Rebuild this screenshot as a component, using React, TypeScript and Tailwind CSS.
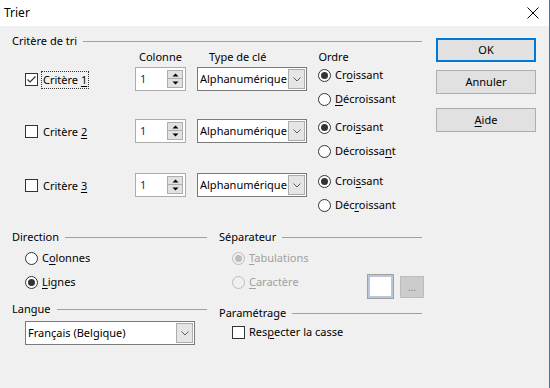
import React from 'react';

function U({ children }: { children: React.ReactNode }) {
  return <span className="underline underline-offset-2">{children}</span>;
}

function GroupHeader({ label }: { label: string }) {
  return (
    <div className="flex items-center h-4">
      <span>{label}</span>
      <div className="flex-1 h-px bg-[#a0a0a0] ml-[6px]" />
    </div>
  );
}

function Radio({
  checked,
  disabled,
  children,
}: {
  checked?: boolean;
  disabled?: boolean;
  children: React.ReactNode;
}) {
  return (
    <div className="flex items-center h-6">
      <div
        className={
          'w-[13px] h-[13px] rounded-full border flex items-center justify-center ' +
          (disabled ? 'border-[#bcbcbc] bg-[#f0f0f0]' : 'border-[#333] bg-white')
        }
      >
        {checked && (
          <div
            className={
              'w-[7px] h-[7px] rounded-full ' + (disabled ? 'bg-[#bcbcbc]' : 'bg-[#333]')
            }
          />
        )}
      </div>
      <span className={'ml-[4px] ' + (disabled ? 'text-[#a0a0a0]' : 'text-black')}>
        {children}
      </span>
    </div>
  );
}

function Checkbox({ checked }: { checked?: boolean }) {
  return (
    <div className="w-[13px] h-[13px] border border-[#333] bg-white flex items-center justify-center">
      {checked && (
        <svg width="11" height="11" viewBox="0 0 11 11">
          <path d="M1.5 5.5 L4 8 L9.5 2.5" fill="none" stroke="#333" strokeWidth="1.2" />
        </svg>
      )}
    </div>
  );
}

function Spin() {
  return (
    <div className="w-[51px] h-[24px] border border-[#acacac] bg-white flex items-center">
      <span className="ml-[4px] flex-1 text-[#4b1262]">1</span>
      <div className="flex flex-col mr-[2px] w-[16px]">
        <div className="h-[9px] bg-[#e1e1e1] border border-[#adadad] flex items-center justify-center">
          <svg width="7" height="4" viewBox="0 0 7 4">
            <path d="M0.5 3.5 L3.5 0.5 L6.5 3.5 Z" fill="#000" />
          </svg>
        </div>
        <div className="h-[9px] bg-[#e1e1e1] border border-[#adadad] border-t-0 flex items-center justify-center">
          <svg width="7" height="4" viewBox="0 0 7 4">
            <path d="M0.5 0.5 L3.5 3.5 L6.5 0.5 Z" fill="#000" />
          </svg>
        </div>
      </div>
    </div>
  );
}

function Dropdown({ value, width }: { value: string; width: string }) {
  return (
    <div className={'h-[24px] border border-[#7a7a7a] bg-white flex items-center ' + width}>
      <span className="ml-[2px] flex-1 whitespace-nowrap overflow-hidden">{value}</span>
      <div className="w-[17px] h-[20px] mr-[1px] bg-[#e5e5e5] border border-[#adadad] flex items-center justify-center">
        <svg width="8" height="5" viewBox="0 0 8 5">
          <path d="M0.5 0.5 L4 4 L7.5 0.5" fill="none" stroke="#606060" strokeWidth="1" />
        </svg>
      </div>
    </div>
  );
}

function CritRow({
  n,
  checked,
  focused,
  top,
  asc,
  desc,
}: {
  n: number;
  checked?: boolean;
  focused?: boolean;
  top: string;
  asc: React.ReactNode;
  desc: React.ReactNode;
}) {
  return (
    <div className={'flex items-start ' + top}>
      <div className="flex items-center h-[33px] pl-[13px] w-[123px]">
        <Checkbox checked={checked} />
        <span
          className={
            'ml-[4px] px-[1px] ' +
            (focused ? 'outline outline-1 outline-dotted outline-[#333]' : '')
          }
        >
          Critère <U>{n}</U>
        </span>
      </div>
      <div className="flex items-center mt-[4px]">
        <Spin />
        <div className="ml-[11px]">
          <Dropdown value="Alphanumérique" width="w-[110px]" />
        </div>
      </div>
      <div className="ml-[11px] flex flex-col">
        <Radio checked>{asc}</Radio>
        <Radio>{desc}</Radio>
      </div>
    </div>
  );
}

function Btn({ children, primary, mt }: { children: React.ReactNode; primary?: boolean; mt: string }) {
  return (
    <div
      className={
        'w-[100px] h-[24px] bg-[#e1e1e1] flex items-center justify-center ' +
        mt +
        ' ' +
        (primary ? 'border-2 border-[#0078d7]' : 'border border-[#adadad]')
      }
    >
      {children}
    </div>
  );
}

export default function App() {
  return (
    <div
      className="w-[550px] h-[388px] bg-[#f0f0f0] border-r border-[#2b78c6] text-[11px] leading-4 text-black overflow-hidden"
      style={{ fontFamily: '"Noto Sans", "Open Sans", sans-serif' }}
    >
      <div className="h-[26px] bg-white flex items-center justify-between pl-[4px] pr-[10px] text-[12px]">
        <span>Trier</span>
        <svg width="12" height="12" viewBox="0 0 12 12">
          <path d="M0.5 0.5 L11.5 11.5 M11.5 0.5 L0.5 11.5" stroke="#000" strokeWidth="1" />
        </svg>
      </div>
      <div className="flex pl-[12px] pt-[7px]">
        <div className="w-[410px]">
          <GroupHeader label="Critère de tri" />
          <div className="flex h-4">
            <span className="ml-[127px]">Colonne</span>
            <span className="ml-[27px]">Type de clé</span>
            <span className="ml-[52px]">Ordre</span>
          </div>
          <CritRow
            n={1}
            checked
            focused
            top="-mt-[2px]"
            asc={<>Cr<U>o</U>issant</>}
            desc={<><U>D</U>écroissant</>}
          />
          <CritRow
            n={2}
            top="mt-[4px]"
            asc={<>Croi<U>s</U>sant</>}
            desc={<>Décroissa<U>n</U>t</>}
          />
          <CritRow
            n={3}
            top="mt-[6px]"
            asc={<>Croi<U>s</U>sant</>}
            desc={<>Déc<U>r</U>oissant</>}
          />

          <div className="flex mt-[12px]">
            <div className="w-[195px]">
              <GroupHeader label="Direction" />
              <div className="pl-[13px] mt-[1px]">
                <Radio>
                  C<U>o</U>lonnes
                </Radio>
                <Radio checked>
                  <U>L</U>ignes
                </Radio>
              </div>
              <div className="mt-[7px]">
                <GroupHeader label="Langue" />
              </div>
              <div className="pl-[13px] mt-[4px]">
                <Dropdown value="Français (Belgique)" width="w-[170px]" />
              </div>
            </div>
            <div className="ml-[12px] w-[203px]">
              <GroupHeader label="Séparateur" />
              <div className="pl-[13px] mt-[1px]">
                <Radio checked disabled>
                  <U>T</U>abulations
                </Radio>
                <div className="flex items-start">
                  <Radio disabled>
                    <U>C</U>aractère
                  </Radio>
                  <div className="ml-auto w-[25px] h-[23px] border-2 border-[#b8c8dc] bg-white outline outline-1 outline-[#a0a0a0] mt-[5px]" />
                  <div className="ml-[7px] w-[24px] h-[22px] border border-[#bcbcbc] bg-[#cccccc] flex items-center justify-center mt-[6px] -mr-[2px] text-[#888] text-[10px]">
                    ...
                  </div>
                </div>
              </div>
              <div className="mt-[7px]">
                <GroupHeader label="Paramétrage" />
              </div>
              <div className="pl-[13px] mt-[3px] flex items-center h-4">
                <Checkbox />
                <span className="ml-[4px]">
                  Res<U>p</U>ecter la casse
                </span>
              </div>
            </div>
          </div>
        </div>
        <div className="ml-[14px] flex flex-col pt-[5px]">
          <Btn primary mt="">
            OK
          </Btn>
          <Btn mt="mt-[8px]">Annuler</Btn>
          <Btn mt="mt-[14px]">
            <span>
              <U>A</U>ide
            </span>
          </Btn>
        </div>
      </div>
    </div>
  );
}
